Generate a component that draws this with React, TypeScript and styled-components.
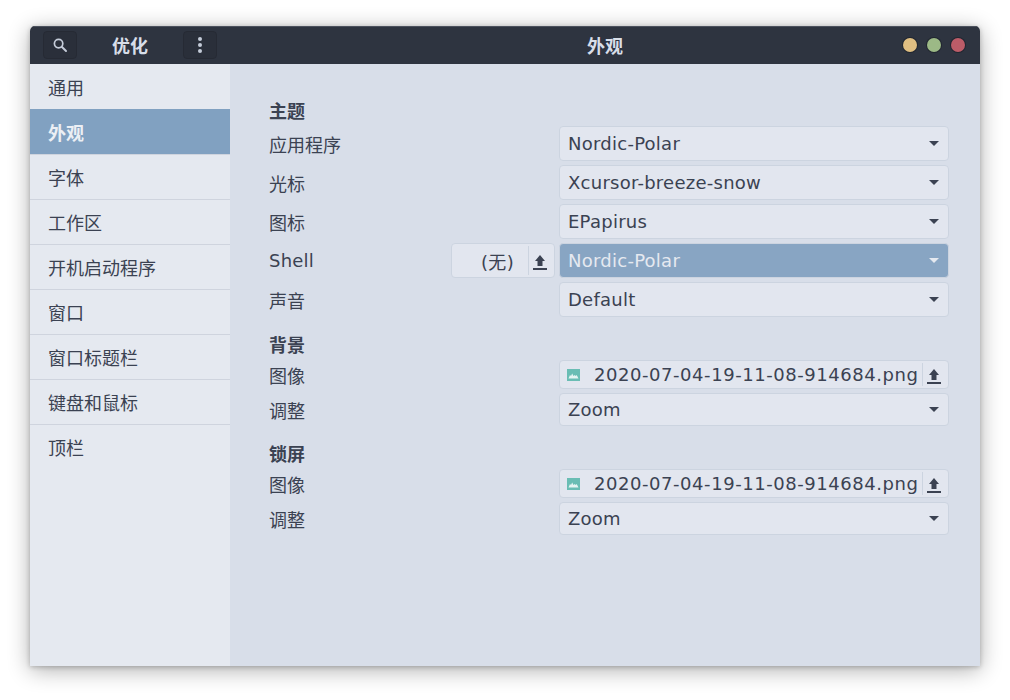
import React from "react";
import styled, { createGlobalStyle } from "styled-components";

const Global = createGlobalStyle`
  html, body { margin: 0; padding: 0; background: #fff; }
  body { font-family: "DejaVu Sans", "Noto Sans CJK SC", sans-serif; font-size: 18px; color: #3b4252; }
`;

const Page = styled.div`
  width: 1010px;
  height: 700px;
  padding: 26px 30px 34px;
  box-sizing: border-box;
`;

const Window = styled.div`
  height: 640px;
  display: flex;
  flex-direction: column;
  border-radius: 5px 5px 0 0;
  overflow: hidden;
  box-shadow: 0 4px 22px rgba(0, 0, 0, 0.32), 0 1px 5px rgba(0, 0, 0, 0.22);
`;

const HeaderBar = styled.header`
  height: 38px;
  flex: none;
  display: flex;
  align-items: center;
  padding-bottom: 1px;
  background: #2e3440;
  color: #d8dee9;
  border-top: 1px solid #4c525e;
  box-sizing: border-box;
`;

const HeaderLeft = styled.div`
  width: 200px;
  flex: none;
  display: flex;
  align-items: center;
  justify-content: space-between;
  padding: 0 13px;
  box-sizing: border-box;
`;

const HeaderButton = styled.div`
  width: 34px;
  height: 28px;
  display: flex;
  align-items: center;
  justify-content: center;
  background: #2a2f3a;
  border: 1px solid #262a34;
  border-radius: 4px;
  box-sizing: border-box;
`;

const HeaderTitle = styled.span`
  font-weight: 700;
  font-size: 18px;
  color: #d8dee9;
`;

const HeaderCenter = styled.div`
  flex: 1;
  display: flex;
  align-items: center;
  justify-content: space-between;
  padding: 0 15px 0 357px;
`;

const Dots = styled.div`
  display: flex;
  gap: 10px;
`;

const Dot = styled.span<{ $color: string }>`
  width: 14px;
  height: 14px;
  border-radius: 50%;
  background: ${({ $color }) => $color};
  box-shadow: 0 0 0 1px rgba(20, 24, 32, 0.5);
`;

const Body = styled.div`
  flex: 1;
  display: flex;
  min-height: 0;
`;

const Sidebar = styled.nav`
  width: 200px;
  flex: none;
  background: #e5e9f0;
`;

const SideItem = styled.div<{ $active?: boolean }>`
  height: 45px;
  display: flex;
  align-items: center;
  padding-left: 18px;
  box-sizing: border-box;
  font-weight: ${({ $active }) => ($active ? 700 : 400)};
  color: ${({ $active }) => ($active ? "#eceff4" : "#3b4252")};
  background: ${({ $active }) => ($active ? "#81a1c1" : "transparent")};
  border-top: 1px solid ${({ $active }) => ($active ? "#81a1c1" : "#cfd4de")};
  &:first-child { border-top-color: transparent; }
`;

const Content = styled.main`
  flex: 1;
  background: #d8dee9;
  padding: 35px 31px 0 39px;
`;

const Section = styled.section`
  display: flex;
  flex-direction: column;
  gap: 4px;
  margin-bottom: 16px;
`;

const SectionTitle = styled.h2`
  margin: 0 0 -3px;
  height: 26px;
  line-height: 26px;
  font-size: 18px;
  font-weight: 700;
  color: #3b4252;
`;

const Row = styled.div`
  display: flex;
  align-items: center;
  justify-content: space-between;
  gap: 4px;
`;

const Label = styled.span<{ $latin?: boolean; $low?: boolean }>`
  flex: 1;
  color: #3b4252;
  letter-spacing: ${({ $latin }) => ($latin ? "0.2px" : "0")};
  padding-top: ${({ $low }) => ($low ? "1px" : "0")};
`;

const Combo = styled.div<{ $active?: boolean; $compact?: boolean }>`
  width: 390px;
  height: ${({ $compact }) => ($compact ? "33px" : "35px")};
  flex: none;
  display: flex;
  align-items: center;
  justify-content: space-between;
  padding: 0 9px 0 8px;
  box-sizing: border-box;
  border-radius: 4px;
  border: 1px solid #ccd4e0;
  background: ${({ $active }) => ($active ? "#88a5c3" : "#e2e6ef")};
  color: ${({ $active }) => ($active ? "#e5e9f0" : "#3b4252")};
  letter-spacing: 0.25px;
`;

const Arrow = styled.span<{ $light?: boolean }>`
  width: 0;
  height: 0;
  border-left: 5px solid transparent;
  border-right: 5px solid transparent;
  border-top: 5px solid ${({ $light }) => ($light ? "#e5e9f0" : "#3b4252")};
`;

const NoneButton = styled.div`
  width: 104px;
  height: 35px;
  flex: none;
  display: flex;
  align-items: center;
  box-sizing: border-box;
  border: 1px solid #ccd4e0;
  border-radius: 4px;
  background: #e2e6ef;
`;

const NoneText = styled.span`
  flex: 1;
  text-align: right;
  padding-right: 14px;
  letter-spacing: 0.3px;
`;

const UploadSlot = styled.span<{ $short?: boolean }>`
  width: 26px;
  height: ${({ $short }) => ($short ? "23px" : "29px")};
  flex: none;
  display: flex;
  align-items: center;
  justify-content: center;
  box-sizing: border-box;
  padding: 4px 3px 0 0;
  border-left: 1px solid #ccd4e0;
`;

const FilePicker = styled.div`
  width: 390px;
  height: 29px;
  flex: none;
  display: flex;
  align-items: center;
  box-sizing: border-box;
  padding-left: 7px;
  border: 1px solid #ccd4e0;
  border-radius: 4px;
  background: #e2e6ef;
`;

const FileName = styled.span`
  flex: 1;
  margin-left: 14px;
  white-space: nowrap;
  letter-spacing: 0.55px;
`;

const SearchIcon = () => (
  <svg width="16" height="16" viewBox="0 0 16 16" fill="none" stroke="#c5ccd9">
    <circle cx="6.6" cy="6.6" r="4.2" strokeWidth="1.7" />
    <path d="M10 10l4 4" strokeWidth="2" strokeLinecap="round" />
  </svg>
);

const MenuIcon = () => (
  <svg width="16" height="16" viewBox="0 0 16 16" fill="#c5ccd9">
    <circle cx="8" cy="2" r="2" />
    <circle cx="8" cy="8" r="2" />
    <circle cx="8" cy="14" r="2" />
  </svg>
);

const UploadIcon = () => (
  <svg width="14" height="15" viewBox="0 0 14 15" fill="#3b4252">
    <path d="M7 0L12 6H9.5V11H4.5V6H2z" />
    <rect x="0" y="13" width="14" height="2" />
  </svg>
);

const ImageIcon = () => (
  <svg width="13" height="12" viewBox="0 0 13 12">
    <rect width="13" height="12" fill="#6abdb4" />
    <path d="M1.5 9.5L3 6l1 1 1.2-2.5L6.5 7l1.2-1 1 1 1-1 1.8 3.5z" fill="#e5f4f2" />
  </svg>
);

const sideItems = ["通用", "外观", "字体", "工作区", "开机启动程序", "窗口", "窗口标题栏", "键盘和鼠标", "顶栏"];
const fileName = "2020-07-04-19-11-08-914684.png";

const ComboRow = ({ label, value, compact }: { label: string; value: string; compact?: boolean }) => (
  <Row>
    <Label $low={compact}>{label}</Label>
    <Combo $compact={compact}>
      {value}
      <Arrow />
    </Combo>
  </Row>
);

const FileRow = ({ label }: { label: string }) => (
  <Row>
    <Label $low>{label}</Label>
    <FilePicker>
      <ImageIcon />
      <FileName>{fileName}</FileName>
      <UploadSlot $short>
        <UploadIcon />
      </UploadSlot>
    </FilePicker>
  </Row>
);

export default function App() {
  return (
    <Page>
      <Global />
      <Window>
        <HeaderBar>
          <HeaderLeft>
            <HeaderButton>
              <SearchIcon />
            </HeaderButton>
            <HeaderTitle>优化</HeaderTitle>
            <HeaderButton>
              <MenuIcon />
            </HeaderButton>
          </HeaderLeft>
          <HeaderCenter>
            <HeaderTitle>外观</HeaderTitle>
            <Dots>
              <Dot $color="#e0bf82" />
              <Dot $color="#9cb986" />
              <Dot $color="#bc5c68" />
            </Dots>
          </HeaderCenter>
        </HeaderBar>
        <Body>
          <Sidebar>
            {sideItems.map((item) => (
              <SideItem key={item} $active={item === "外观"}>
                {item}
              </SideItem>
            ))}
          </Sidebar>
          <Content>
            <Section>
              <SectionTitle>主题</SectionTitle>
              <ComboRow label="应用程序" value="Nordic-Polar" />
              <ComboRow label="光标" value="Xcursor-breeze-snow" />
              <ComboRow label="图标" value="EPapirus" />
              <Row>
                <Label $latin>Shell</Label>
                <NoneButton>
                  <NoneText>(无)</NoneText>
                  <UploadSlot>
                    <UploadIcon />
                  </UploadSlot>
                </NoneButton>
                <Combo $active>
                  Nordic-Polar
                  <Arrow $light />
                </Combo>
              </Row>
              <ComboRow label="声音" value="Default" />
            </Section>
            <Section>
              <SectionTitle>背景</SectionTitle>
              <FileRow label="图像" />
              <ComboRow label="调整" value="Zoom" compact />
            </Section>
            <Section>
              <SectionTitle>锁屏</SectionTitle>
              <FileRow label="图像" />
              <ComboRow label="调整" value="Zoom" compact />
            </Section>
          </Content>
        </Body>
      </Window>
    </Page>
  );
}
